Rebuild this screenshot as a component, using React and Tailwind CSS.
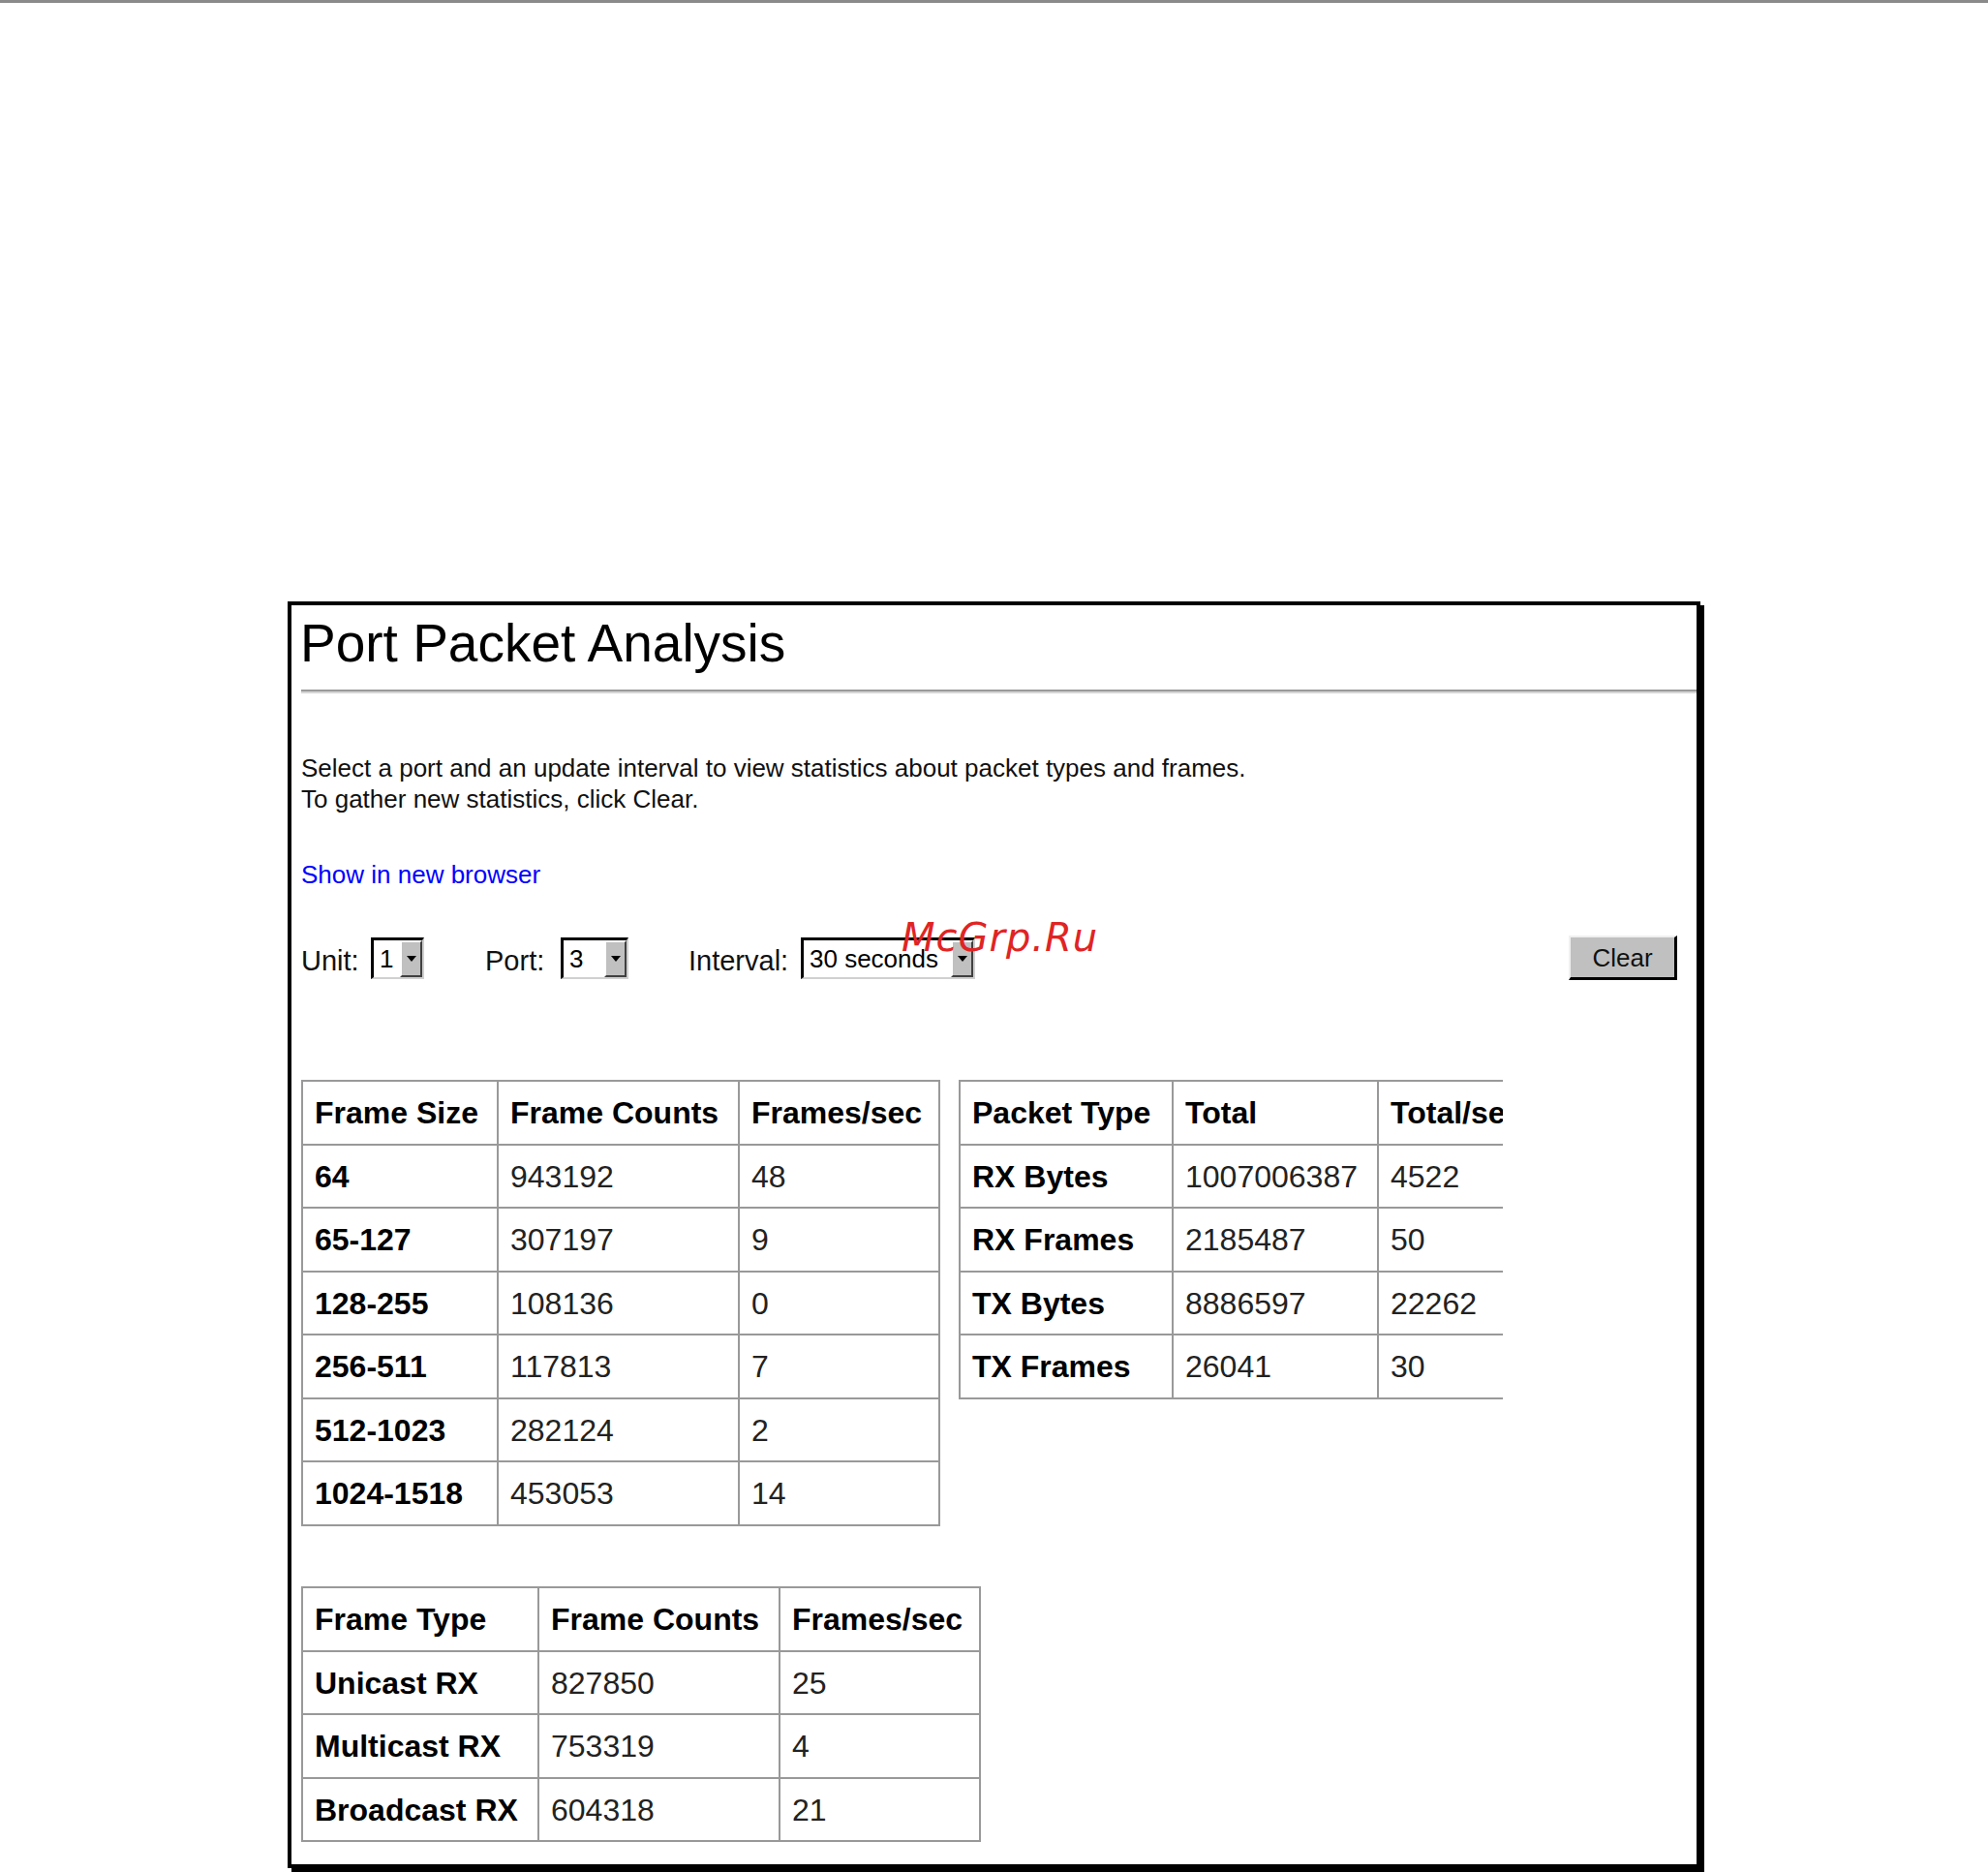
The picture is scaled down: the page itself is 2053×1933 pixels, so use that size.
import React from "react";

const GRID = "border-[#999999]";

function Select({ width, value }) {
  return (
    <div
      className="flex h-[43px] bg-white border-t-[3px] border-l-[3px] border-b-[2px] border-r-[2px] border-t-black border-l-black border-b-[#d0d0d0] border-r-[#d0d0d0]"
      style={{ width }}
    >
      <div className="flex-1 flex items-center pl-[6px] text-[26px] leading-none text-black overflow-hidden whitespace-nowrap">
        {value}
      </div>
      <div className="w-[23px] h-full bg-[#c0c0c0] border-t-2 border-l-2 border-b-2 border-r-2 border-t-white border-l-white border-b-[#404040] border-r-[#404040] flex items-center justify-center">
        <div className="w-0 h-0 border-l-[5px] border-r-[5px] border-t-[6px] border-l-transparent border-r-transparent border-t-black" />
      </div>
    </div>
  );
}

function Table({ cols, rows, clip, totalWidth }) {
  return (
    <div className={clip ? "overflow-hidden" : ""} style={clip ? { width: totalWidth } : undefined}>
      <div className={`border-t-2 border-l-2 ${GRID} inline-block`}>
        {rows.map((row, ri) => (
          <div key={ri} className="flex">
            {row.map((cell, ci) => (
              <div
                key={ci}
                className={`${ri % 2 === 0 ? "h-[66px]" : "h-[65px]"} border-r-2 border-b-2 ${GRID} flex items-center pl-[12px] whitespace-nowrap overflow-hidden text-[32px] leading-none ${
                  ri === 0 || ci === 0 ? "font-bold text-black" : "text-[#222222]"
                }`}
                style={{ width: cols[ci] }}
              >
                {cell}
              </div>
            ))}
          </div>
        ))}
      </div>
    </div>
  );
}

export default function App() {
  const t1 = [
    ["Frame Size", "Frame Counts", "Frames/sec"],
    ["64", "943192", "48"],
    ["65-127", "307197", "9"],
    ["128-255", "108136", "0"],
    ["256-511", "117813", "7"],
    ["512-1023", "282124", "2"],
    ["1024-1518", "453053", "14"],
  ];
  const t2 = [
    ["Packet Type", "Total", "Total/sec"],
    ["RX Bytes", "1007006387", "4522"],
    ["RX Frames", "2185487", "50"],
    ["TX Bytes", "8886597", "22262"],
    ["TX Frames", "26041", "30"],
  ];
  const t3 = [
    ["Frame Type", "Frame Counts", "Frames/sec"],
    ["Unicast RX", "827850", "25"],
    ["Multicast RX", "753319", "4"],
    ["Broadcast RX", "604318", "21"],
  ];

  return (
    <div className="w-[2053px] h-[1933px] bg-white overflow-hidden font-['Liberation_Sans',Arial,sans-serif] text-black">
      <div className="h-[3px] bg-[#8a8a8a]" />
      <div className="relative ml-[297px] mt-[618px] w-[1459px] h-[1308px] border-4 border-black shadow-[4px_4px_0_#000]">
        <div className="pl-[9px] pt-[12px] text-[55px] leading-[54px] whitespace-nowrap">Port Packet Analysis</div>
        <div className="ml-[10px] mt-[21px] border-t-2 border-b-2 border-t-[#9a9a9a] border-b-[#d6d6d6]" />

        <div className="pl-[10px] mt-[61px] text-[26px] leading-[32px] text-[#111111]">
          <div>Select a port and an update interval to view statistics about packet types and frames.</div>
          <div>To gather new statistics, click Clear.</div>
        </div>

        <div className="pl-[10px] mt-[46px] text-[26px] leading-[32px] text-[#0000ff]">Show in new browser</div>

        <div className="mt-[47px] pl-[10px] pr-[20px] h-[46px] flex items-center">
          <div className="w-[72px] pt-[7px] text-[29px] leading-none text-[#111111]">Unit:</div>
          <Select width={55} value="1" />
          <div className="ml-[63px] w-[78px] pt-[7px] text-[29px] leading-none text-[#111111]">Port:</div>
          <Select width={70} value="3" />
          <div className="ml-[62px] w-[116px] pt-[7px] text-[29px] leading-none text-[#111111]">Interval:</div>
          <Select width={180} value="30 seconds" />
          <button className="ml-auto w-[112px] h-[46px] bg-[#c0c0c0] border-t-2 border-l-2 border-b-[3px] border-r-[3px] border-t-[#f0f0f0] border-l-[#f0f0f0] border-b-black border-r-black text-[26px] leading-none text-[#111111] font-['Liberation_Sans',Arial,sans-serif]">
            Clear
          </button>
        </div>

        <div className="mt-[103px] pl-[10px] flex items-start gap-[19px]">
          <Table cols={[202, 249, 207]} rows={t1} />
          <Table cols={[220, 212, 200]} rows={t2} clip totalWidth={562} />
        </div>

        <div className="mt-[62px] pl-[10px]">
          <Table cols={[244, 249, 207]} rows={t3} />
        </div>

        <div className="absolute left-[630px] top-[323px] text-[40px] leading-none italic tracking-[1px] text-[#e02424] font-['DejaVu_Sans',sans-serif] whitespace-nowrap">
          McGrp.Ru
        </div>
      </div>
    </div>
  );
}
